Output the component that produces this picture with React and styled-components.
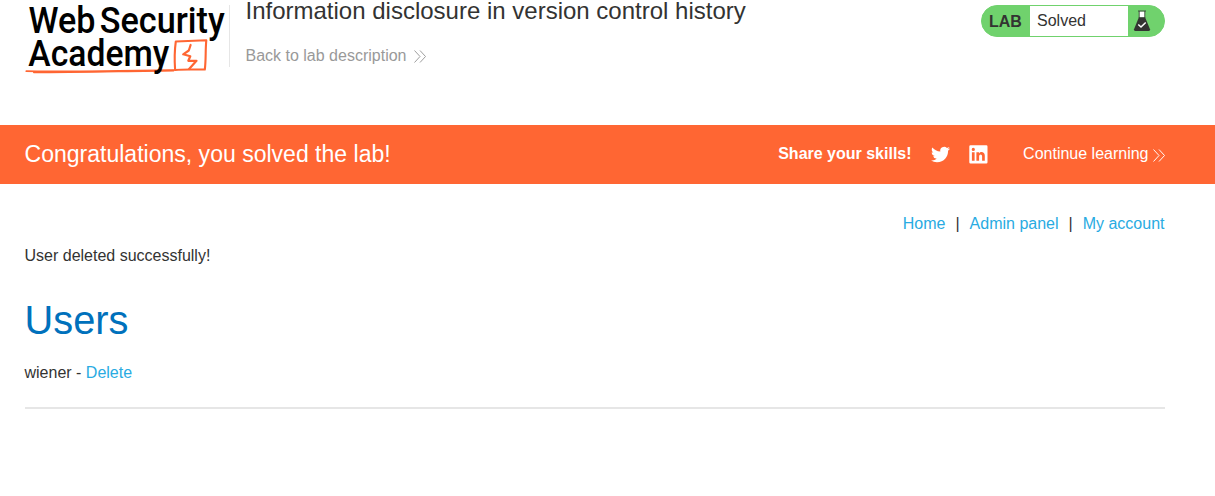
import React from "react";
import styled, { createGlobalStyle } from "styled-components";

const GlobalStyle = createGlobalStyle`
  * { box-sizing: border-box; }
  body {
    margin: 0;
    background: #fff;
    color: #333332;
    font-family: "Liberation Sans", Arial, sans-serif;
    font-size: 16px;
    line-height: 20px;
  }
`;

const Container = styled.div`
  width: 1140px;
  margin-left: 24.5px;
`;

const Header = styled(Container)`
  display: flex;
  align-items: flex-start;
  height: 125px;
`;

const Logo = styled.svg`
  display: block;
  flex: none;
  width: 204.5px;
  height: 80px;
  overflow: visible;
`;

const TitleArea = styled.div`
  flex: 1;
  height: 62px;
  margin-top: 5px;
  padding-left: 15.5px;
  border-left: 1px solid #e6e6e6;
`;

const Title = styled.h2`
  margin: -8px 0 0;
  font-size: 24px;
  font-weight: 400;
  line-height: 28px;
`;

const ArrowLink = styled.a`
  display: inline-flex;
  align-items: center;
  gap: ${(p) => p.$gap}px;
  color: ${(p) => p.$color};
  text-decoration: none;
  white-space: nowrap;
`;

const BackLink = styled(ArrowLink)`
  margin-top: 21px;
`;

const Status = styled.div`
  display: flex;
  flex: none;
  width: 184px;
  height: 32px;
  margin: 5px -0.5px 0 0;
  border: 1px solid #70d26d;
  border-radius: 16px;
  background: #70d26d;
  line-height: 30px;
`;

const StatusTag = styled.span`
  width: 48px;
  padding: 1px 0 0 7px;
  font-weight: 700;
`;

const StatusText = styled.span`
  width: 98px;
  padding-left: 7px;
  background: #fff;
`;

const Flask = styled.svg`
  width: 18px;
  height: 22px;
  margin: 4px 0 0 5px;
`;

const Banner = styled.section`
  height: 59px;
  background: #ff6633;
  color: #fff;
`;

const BannerRow = styled(Container)`
  display: flex;
  align-items: center;
  height: 58px;
`;

const BannerTitle = styled.h4`
  flex: 1;
  margin: 0;
  font-size: 23.04px;
  font-weight: 400;
`;

const Share = styled.div`
  display: flex;
  align-items: center;
  font-weight: 700;
`;

const SocialIcon = styled.svg`
  width: 19px;
  height: 19px;
  margin: 1px 0 0 19px;
  fill: #fff;
`;

const ContinueLink = styled(ArrowLink)`
  margin-left: 35.5px;
`;

const Nav = styled.nav`
  display: flex;
  justify-content: flex-end;
  gap: 10px;
  padding-top: 30px;
`;

const Link = styled.a`
  color: #29abe2;
  text-decoration: none;
`;

const Message = styled.p`
  margin: 12px 0 0;
`;

const Heading = styled.h1`
  margin: 30px 0 0;
  color: #0071bc;
  font-size: 39.8px;
  font-weight: 400;
  line-height: 48px;
`;

const UserRow = styled.div`
  margin-top: 19px;
`;

const Divider = styled.hr`
  height: 2px;
  margin: 24px 0 0;
  border: 0;
  background: #e6e6e6;
`;

const Chevrons = styled.svg`
  width: 12px;
  height: 13px;
  margin-top: ${(p) => p.$drop || 0}px;
  fill: none;
  stroke: currentColor;
  stroke-width: 0.95;
`;

const LogoText = styled.text`
  font-family: Roboto, "Liberation Sans", sans-serif;
  font-size: 36.5px;
  font-weight: 500;
  fill: #000;
`;

function DoubleArrow({ drop }) {
  return (
    <Chevrons viewBox="0 0 12 13" $drop={drop}>
      <path d="M0.5 0.5 L6 6.5 L0.5 12.5 M6 0.5 L11.5 6.5 L6 12.5" />
    </Chevrons>
  );
}

function AcademyLogo() {
  return (
    <Logo viewBox="25.2 0 204.5 80">
      <g fill="none" stroke="#ff6633" strokeLinejoin="round" strokeLinecap="round">
        <path d="M34 72.4 C80 72.4 130 71 174 70.6" strokeWidth="1.6" />
        <path d="M26.5 71.2 C60 72.2 120 70.6 174 70.2" strokeWidth="1.7" />
        <path d="M175.3 70 C174.6 60 174.8 50 176 41.5 L206.5 40.3 C205.5 50 206.3 60 205 69.5 C196 69.8 186 69 175.5 70" strokeWidth="2.1" />
        <path d="M190.8 45 L189 50.5 L183.4 54.3 L190.5 56.3 L188.5 60.8 L196.7 60.8 L189.3 69" strokeWidth="2.2" />
      </g>
      <LogoText x="28.7" y="33.3" textLength="67" lengthAdjust="spacingAndGlyphs">Web</LogoText>
      <LogoText x="99.9" y="33.3" textLength="125" lengthAdjust="spacingAndGlyphs">Security</LogoText>
      <LogoText x="28.5" y="66" textLength="141" lengthAdjust="spacingAndGlyphs">Academy</LogoText>
    </Logo>
  );
}

export default function App() {
  return (
    <>
      <GlobalStyle />
      <Header as="header">
        <AcademyLogo />
        <TitleArea>
          <Title>Information disclosure in version control history</Title>
          <BackLink $gap={8} $color="#999">
            Back to lab description <DoubleArrow />
          </BackLink>
        </TitleArea>
        <Status>
          <StatusTag>LAB</StatusTag>
          <StatusText>Solved</StatusText>
          <Flask viewBox="0 0 18 22">
            <path d="M6.3 1.5 H11.7 V7.5 H6.3 Z" fill="#fff" />
            <path d="M5 1 H13 M6.2 1 V8 M11.8 1 V8" fill="none" stroke="#333332" strokeWidth="0.8" />
            <path d="M5.9 7.3 H12.1 L17 19.2 Q17.4 21 15.6 21 H2.4 Q0.6 21 1 19.2 Z" fill="#333332" />
            <path d="M5.3 14.5 L8 17 L12.7 12.5" fill="none" stroke="#fff" strokeWidth="1.5" />
          </Flask>
        </Status>
      </Header>
      <Banner>
        <BannerRow>
          <BannerTitle>Congratulations, you solved the lab!</BannerTitle>
          <Share>
            Share your skills!
            <SocialIcon viewBox="0 0 24 24">
              <path d="M23.95 4.57a10 10 0 0 1-2.82.77 4.96 4.96 0 0 0 2.16-2.72c-.95.55-2 .95-3.13 1.18a4.92 4.92 0 0 0-8.38 4.48C7.69 8.09 4.07 6.13 1.64 3.16a4.82 4.82 0 0 0-.67 2.48c0 1.71.87 3.21 2.19 4.1a4.9 4.9 0 0 1-2.23-.62v.06a4.92 4.92 0 0 0 3.95 4.83 5 5 0 0 1-2.21.08 4.94 4.94 0 0 0 4.6 3.42A9.87 9.87 0 0 1 0 19.54a14 14 0 0 0 7.55 2.21c9.05 0 14-7.5 14-13.98 0-.21 0-.42-.02-.63a9.94 9.94 0 0 0 2.46-2.55z" />
            </SocialIcon>
            <SocialIcon viewBox="0 0 19 19">
              <path fillRule="evenodd" d="M1.5 0.3H17.3Q18.5 0.3 18.5 1.5V17.3Q18.5 18.5 17.3 18.5H1.5Q0.3 18.5 0.3 17.3V1.5Q0.3 0.3 1.5 0.3Z M2.9 7.2V15.8H5.6V7.2Z M2.7 4.4A1.6 1.6 0 1 0 5.9 4.4A1.6 1.6 0 1 0 2.7 4.4Z M7.4 7.2V15.8H10.1V11.5C10.1 8.7 13.1 8.8 13.1 11.4V15.8H15.8V10.8C15.8 6.7 11.8 6 10 8.4V7.2Z" />
            </SocialIcon>
          </Share>
          <ContinueLink $gap={4} $color="#fff">
            Continue learning <DoubleArrow drop={3} />
          </ContinueLink>
        </BannerRow>
      </Banner>
      <Container as="main">
        <Nav>
          <Link>Home</Link>
          <span>|</span>
          <Link>Admin panel</Link>
          <span>|</span>
          <Link>My account</Link>
        </Nav>
        <Message>User deleted successfully!</Message>
        <Heading>Users</Heading>
        <UserRow>
          wiener - <Link>Delete</Link>
        </UserRow>
        <Divider />
      </Container>
    </>
  );
}
